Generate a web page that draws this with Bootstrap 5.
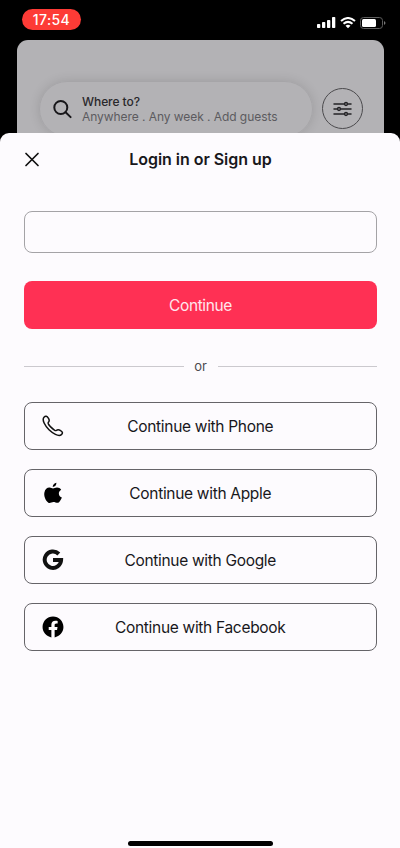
<!DOCTYPE html>
<html lang="en">
<head>
<meta charset="utf-8">
<meta name="viewport" content="width=device-width, initial-scale=1">
<title>Login in or Sign up</title>
<link href="https://cdn.jsdelivr.net/npm/bootstrap@5.3.0/dist/css/bootstrap.min.css" rel="stylesheet">
<style>
body{font-family:Inter,"Liberation Sans",sans-serif;width:400px;height:848px;background:#000;color:#18171b}
svg{display:block;flex:none}
.status{height:40px;padding:9px 14px 0 22px}
.clock{width:59px;height:21px;background:#fd3b36;font-size:14px;font-weight:500;line-height:21px;letter-spacing:.4px}
.signals{gap:4px;padding-top:8px}
.behind{height:93px;margin:0 16px 0 17px;padding:41px 21px 0 22px;background:#b3b2b5;border-radius:11px 11px 0 0;gap:9px}
.search{width:274px;height:56px;border:1px solid #a6a5a8;border-radius:28px;box-shadow:0 0 11px rgba(0,0,0,.13);padding:0 13px;gap:10px}
.where{font-size:12px;line-height:15px;font-weight:500;color:#29282b;letter-spacing:-.06px}
.place{font-size:12px;line-height:15px;color:#5c5b5f;letter-spacing:-.06px}
.filter{width:41px;height:41px;border:1px solid #4b4a4d;margin-top:7px}
.sheet{height:715px;background:#fdfbfe;border-radius:9px 9px 0 0;padding:0 23px 0 24px}
.sheet-head{height:52px}
.sheet-head h1{font-size:16px;font-weight:600;line-height:20px;letter-spacing:-.04px}
.close-btn{width:16px;height:16px;left:0;top:19px}
.field{height:42px;margin-top:26px;border:1px solid #a4a3a6;border-radius:8px;background:transparent}
.go{height:48px;margin-top:28px;border-radius:8px;background:#ff3054;color:#ffe6ed;font-size:15.5px;letter-spacing:-.4px}
.go span{display:block;padding-top:1px}
.or{height:20px;margin-top:27px;font-size:13px;line-height:20px;color:#4c4b4f}
.or span{width:34px}
.rule{height:1px;background:#cbc9ce}
.options{margin-top:26px;gap:19px}
.option{height:48px;border:1px solid #656468;border-radius:8px;background:transparent;color:#18171b;padding:0 17px 0 16.5px;font-size:15.5px;letter-spacing:-.31px}
.option span{padding:2px 22px 0 0}
.home{width:145px;height:5px;background:#000;margin-bottom:2px}
</style>
<script src="https://cdn.jsdelivr.net/npm/bootstrap@5.3.0/dist/js/bootstrap.bundle.min.js"></script>
</head>
<body class="overflow-hidden">
<header class="status d-flex justify-content-between align-items-start">
  <div class="clock rounded-pill text-white text-center">17:54</div>
  <div class="signals d-flex">
    <svg width="20" height="12" viewBox="0 0 20 12" fill="#fff"><rect x="1" y="7" width="3.3" height="4" rx=".8"/><rect x="6" y="5" width="3.3" height="6" rx=".8"/><rect x="11" y="3" width="3.3" height="8" rx=".8"/><rect x="16" y="0" width="3.3" height="11" rx=".8"/></svg>
    <svg width="16" height="12" viewBox="0 0 16 12" fill="none" stroke="#fff" stroke-width="2"><path d="M1 4Q8-2 15 4M3.5 6.7Q8 3 12.5 6.7"/><path d="M5.5 8.8Q8 6.8 10.5 8.8L8 11.3Z" fill="#fff" stroke="none"/></svg>
    <svg width="26" height="12" viewBox="0 0 26 12"><rect x=".5" y=".5" width="22" height="11" rx="3" fill="none" stroke="#5d5d5d"/><rect x="2" y="2" width="14" height="8" rx="1.5" fill="#fff"/><path d="M24 4v4q3-2 0-4" fill="#777"/></svg>
  </div>
</header>
<section class="behind d-flex align-items-start overflow-hidden">
  <div class="search d-flex align-items-center">
    <svg width="19" height="19" viewBox="0 0 19 19" fill="none" stroke="#18171a" stroke-width="2" stroke-linecap="round"><circle cx="7.8" cy="7.5" r="6.5"/><path d="m12.6 12.3 5 4.8"/></svg>
    <div><div class="where">Where to?</div><div class="place">Anywhere . Any week . Add guests</div></div>
  </div>
  <div class="filter rounded-circle d-flex align-items-center justify-content-center">
    <svg width="19" height="16" viewBox="0 0 19 16" fill="#b3b2b5" stroke="#242326" stroke-width="1.5" stroke-linecap="round"><path d="M1 3h17M1 8h17M1 13h17"/><circle cx="13" cy="3" r="1.4"/><circle cx="6" cy="8" r="1.4"/><circle cx="13" cy="13" r="1.4"/></svg>
  </div>
</section>
<main class="sheet d-flex flex-column">
  <div class="sheet-head position-relative d-flex align-items-center justify-content-center">
    <button class="close-btn position-absolute p-0 border-0 bg-transparent" aria-label="Close"><svg width="16" height="16" viewBox="0 0 16 16" stroke="#111" stroke-width="1.7" stroke-linecap="round"><path d="m2 1.5 12 12M14 1.5l-12 12"/></svg></button>
    <h1 class="m-0">Login in or Sign up</h1>
  </div>
  <input class="field form-control" type="text" aria-label="Account">
  <button class="go btn border-0 p-0"><span>Continue</span></button>
  <div class="or d-flex align-items-center"><div class="rule flex-fill"></div><span class="text-center">or</span><div class="rule flex-fill"></div></div>
  <div class="options d-flex flex-column">
    <button class="option btn d-flex align-items-center"><svg width="22" height="22" viewBox="0 0 22 22" fill="none" stroke="#111" stroke-width="1.5" stroke-linejoin="round"><path d="M2 2.2C3.5.7 5 1 6.5 3.3C7.8 5.5 7.6 6.2 6.3 7.4C5.6 8.2 7.5 10.7 9.2 12.4C11 14.2 13.3 16.2 14.3 15.5C15.6 14.2 16.4 14.1 18.6 15.6C20.8 17 21 18.2 19.4 19.7C16.5 22 10.5 18.2 7 14.8C3.5 11.3-.5 5 2 2.2Z"/></svg><span class="flex-fill text-center">Continue with Phone</span></button>
    <button class="option btn d-flex align-items-center"><svg width="22" height="22" viewBox="0 0 22 22"><path d="M11 6.6C12.2 6.6 13.3 5.6 15 5.6C16.7 5.6 18.3 6.4 19.2 7.8C17.3 8.9 16.7 10.3 16.9 12C17.1 13.8 18.2 15 19.9 15.6C19.2 17.4 18.2 19.2 17 20.3C15.5 21.7 13.4 20.1 11.4 20.1C9.5 20.1 7.7 21.7 6.1 20.4C3.3 18 1.7 13.6 2.4 10.4C3 7.4 5.2 5.5 7.6 5.6C9 5.7 10 6.6 11 6.6ZM10.7 5C10.7 2.8 12.3 1.1 14.4.8C14.6 3 12.9 5 10.7 5Z"/></svg><span class="flex-fill text-center">Continue with Apple</span></button>
    <button class="option btn d-flex align-items-center"><svg width="22" height="22" viewBox="0 0 22 22" fill="none" stroke="#111" stroke-width="4"><path d="M16.8 5A8.2 8.2 0 1 0 19.1 11H11"/></svg><span class="flex-fill text-center">Continue with Google</span></button>
    <button class="option btn d-flex align-items-center"><svg width="22" height="22" viewBox="20 20 472 472"><path d="M480 257.35c0-123.7-100.3-224-224-224s-224 100.3-224 224c0 111.8 81.9 204.47 189 221.29V322.12h-56.89v-64.77H221V208c0-56.13 33.45-87.16 84.61-87.16 24.51 0 50.15 4.38 50.15 4.38v55.13H327.5c-27.81 0-36.51 17.26-36.51 35v42h62.12l-9.92 64.77H291v156.54c107.1-16.81 189-109.48 189-221.31z"/></svg><span class="flex-fill text-center">Continue with Facebook</span></button>
  </div>
  <div class="home rounded-pill mt-auto align-self-center"></div>
</main>
</body>
</html>
